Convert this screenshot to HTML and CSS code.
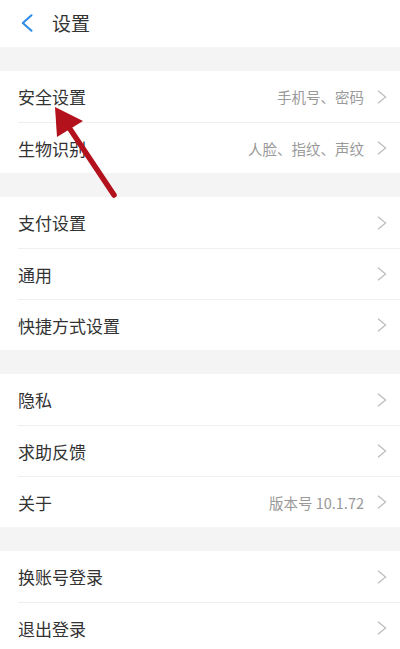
FILE: index.html
```html
<!DOCTYPE html>

<html>

<head>
    <meta charset="utf-8">

    <link rel="stylesheet" href="styles.css">
</head>

<body>
<div class="page">
    <div class="topbar">
        <svg class="back" width="12" height="18" viewBox="0 0 12 18">
            <path d="M10.5 1.2 L1.8 9 L10.5 16.8" fill="none" stroke="#2b8be6" stroke-width="2" stroke-linecap="round" stroke-linejoin="round"/>
        </svg>
        <div class="title">设置</div>
    </div>

    <div class="gap"></div>
    <div class="group">
        <div class="item"><span class="name">安全设置</span><span class="value">手机号、密码</span><svg class="more" viewBox="0 0 10 14"><path d="M1 0.8 L8.6 7 L1 13.2"/></svg></div>
        <div class="item"><span class="name">生物识别</span><span class="value">人脸、指纹、声纹</span><svg class="more" viewBox="0 0 10 14"><path d="M1 0.8 L8.6 7 L1 13.2"/></svg></div>
    </div>

    <div class="gap"></div>
    <div class="group">
        <div class="item"><span class="name">支付设置</span><svg class="more" viewBox="0 0 10 14"><path d="M1 0.8 L8.6 7 L1 13.2"/></svg></div>
        <div class="item"><span class="name">通用</span><svg class="more" viewBox="0 0 10 14"><path d="M1 0.8 L8.6 7 L1 13.2"/></svg></div>
        <div class="item"><span class="name">快捷方式设置</span><svg class="more" viewBox="0 0 10 14"><path d="M1 0.8 L8.6 7 L1 13.2"/></svg></div>
    </div>

    <div class="gap"></div>
    <div class="group">
        <div class="item"><span class="name">隐私</span><svg class="more" viewBox="0 0 10 14"><path d="M1 0.8 L8.6 7 L1 13.2"/></svg></div>
        <div class="item"><span class="name">求助反馈</span><svg class="more" viewBox="0 0 10 14"><path d="M1 0.8 L8.6 7 L1 13.2"/></svg></div>
        <div class="item"><span class="name">关于</span><span class="value">版本号 10.1.72</span><svg class="more" viewBox="0 0 10 14"><path d="M1 0.8 L8.6 7 L1 13.2"/></svg></div>
    </div>

    <div class="gap"></div>
    <div class="group">
        <div class="item"><span class="name">换账号登录</span><svg class="more" viewBox="0 0 10 14"><path d="M1 0.8 L8.6 7 L1 13.2"/></svg></div>
        <div class="item"><span class="name">退出登录</span><svg class="more" viewBox="0 0 10 14"><path d="M1 0.8 L8.6 7 L1 13.2"/></svg></div>
    </div>

    <svg class="pointer" width="400" height="649" viewBox="0 0 400 649">
        <line x1="66" y1="123" x2="114" y2="195" stroke="#b3121c" stroke-width="5.5" stroke-linecap="round"/>
        <polygon points="55,107 57,137 83,121" fill="#b3121c"/>
    </svg>
</div>
</body>
</html>
```

FILE: styles.css
```css
* {
    box-sizing: border-box;
}

body {
    margin: 0;
    background-color: #fff;
    font-family: "Noto Sans CJK SC", "Noto Sans", sans-serif;
}

.page {
    width: 400px;
    height: 649px;
    overflow: hidden;
    position: relative;
}

.topbar {
    height: 47px;
    display: flex;
    align-items: center;
    padding-left: 21px;
}

.back {
    margin-top: -2px;
}

.title {
    margin-left: 19px;
    font-size: 19px;
    color: #333;
    margin-top: -2px;
}

.gap {
    height: 24px;
    background-color: #f4f4f4;
}

.item {
    height: 51px;
    margin-left: 18px;
    padding-right: 13px;
    display: flex;
    align-items: center;
}

.item + .item {
    border-top: 1px solid #efefef;
}

.name {
    flex: 1;
    font-size: 17px;
    color: #333;
}

.value {
    font-size: 14.5px;
    color: #999;
    margin-right: 13px;
}

.more {
    width: 10px;
    height: 14px;
    fill: none;
    stroke: #bbb;
    stroke-width: 1.2;
}

.pointer {
    position: absolute;
    left: 0;
    top: 0;
}
```
